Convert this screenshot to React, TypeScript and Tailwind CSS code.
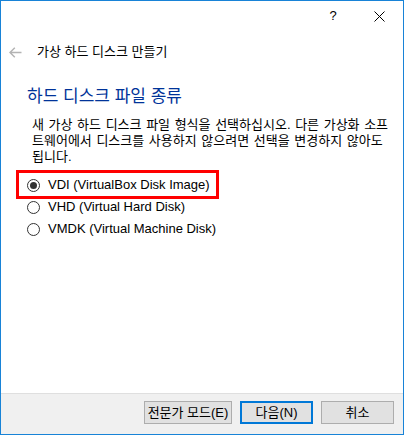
import React from 'react';

const font = { fontFamily: "'Liberation Sans', 'Noto Sans CJK KR', sans-serif" };

const Radio = ({ checked }: { checked?: boolean }) => (
    <span className="w-[13px] h-[13px] rounded-full border border-[#333333] bg-white flex items-center justify-center shrink-0">
        {checked && <span className="w-[7px] h-[7px] rounded-full bg-[#333333]" />}
    </span>
);

const options = [
    { label: 'VDI (VirtualBox Disk Image)', checked: true },
    { label: 'VHD (Virtual Hard Disk)', checked: false },
    { label: 'VMDK (Virtual Machine Disk)', checked: false },
];

export default function App() {
    return (
        <div style={font} className="w-[404px] h-[435px] border border-[#1883d7] bg-white flex flex-col text-[13px] text-black">
            {/* caption buttons */}
            <div className="h-[30px] flex justify-end pr-[1px]">
                <div className="w-[46px] flex items-center justify-center text-[13px]">?</div>
                <div className="w-[46px] flex items-center justify-center">
                    <svg width="11" height="11" viewBox="0 0 11 11" stroke="#000" strokeWidth="1">
                        <path d="M0.5 0.5 L10.5 10.5 M10.5 0.5 L0.5 10.5" />
                    </svg>
                </div>
            </div>

            {/* wizard nav */}
            <div className="mt-[9px] h-[24px] flex items-center pl-[8px]">
                <svg width="13" height="11" viewBox="0 0 13 11" fill="none" stroke="#b4b4b4" strokeWidth="1.5">
                    <path d="M1 5.5 H12.5 M5.8 0.8 L1 5.5 L5.8 10.2" />
                </svg>
                <span className="ml-[15px]">가상 하드 디스크 만들기</span>
            </div>

            <div className="flex-1 flex flex-col">
                <h1 className="mt-[22px] pl-[26px] text-[17px] leading-[22px] text-[#003399]">하드 디스크 파일 종류</h1>
                <p className="mt-[9px] pl-[31px] leading-[16px] whitespace-nowrap [word-spacing:1px]">
                    새 가상 하드 디스크 파일 형식을 선택하십시오. 다른 가상화 소프<br />
                    트웨어에서 디스크를 사용하지 않으려면 선택을 변경하지 않아도<br />
                    됩니다.
                </p>
                <div className="mt-[9px] pl-[26px] flex flex-col">
                    {options.map((opt, i) => (
                        <div key={opt.label} className="relative h-[22px] flex items-center gap-[8px]">
                            <Radio checked={opt.checked} />
                            <span>{opt.label}</span>
                            {i === 0 && (
                                <div className="absolute left-[-11px] top-[-4px] w-[203px] h-[29px] border-[3px] border-[#ff0000]" />
                            )}
                        </div>
                    ))}
                </div>
            </div>

            {/* footer */}
            <div className="h-[41px] border-t border-[#dfdfdf] bg-[#f0f0f0] flex justify-end items-start pt-[7px] pr-[9px] gap-[8px]">
                <button className="w-[88px] h-[23px] border border-[#adadad] bg-[#e1e1e1] flex items-center justify-center">전문가 모드(E)</button>
                <button className="w-[73px] h-[23px] border-2 border-[#0078d7] bg-[#e1e1e1] flex items-center justify-center">다음(N)</button>
                <button className="w-[73px] h-[23px] border border-[#adadad] bg-[#e1e1e1] flex items-center justify-center">취소</button>
            </div>
        </div>
    );
}
